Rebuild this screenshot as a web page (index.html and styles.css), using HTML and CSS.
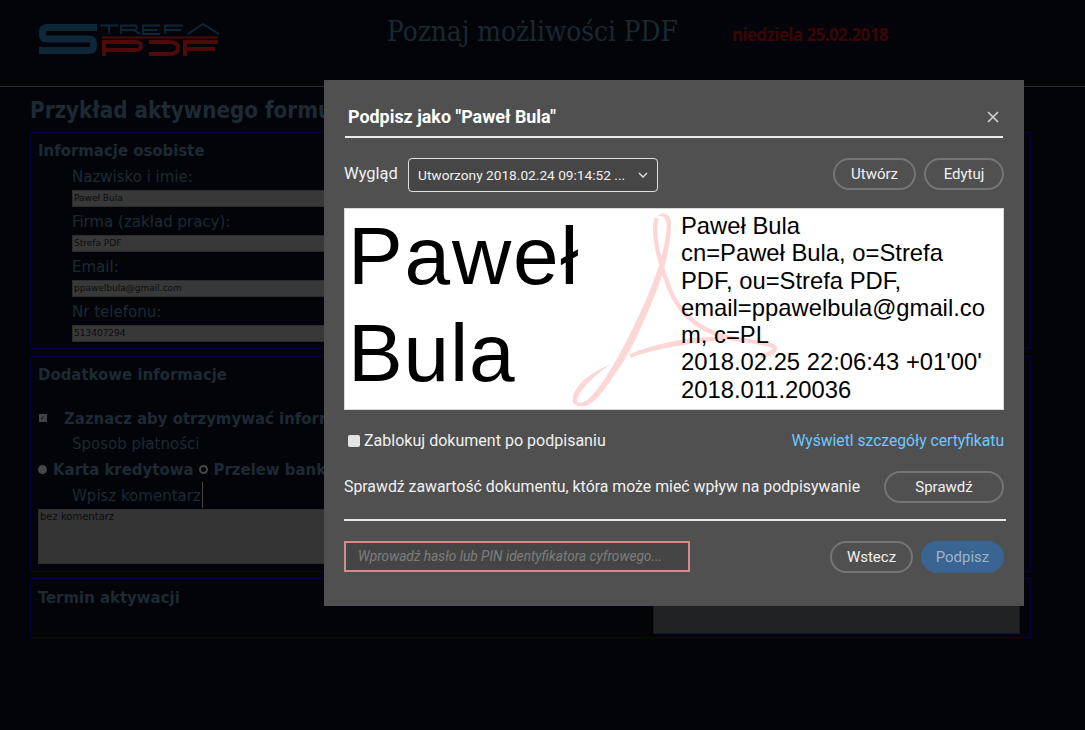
FILE: index.html
```html
<!DOCTYPE html>
<html lang="pl">
<head>
<meta charset="utf-8">
<title>Podpisz jako</title>
<link rel="stylesheet" href="styles.css">
</head>
<body>
<header class="top">
  <svg class="logo" width="190" height="40" viewBox="0 0 190 40" aria-label="Strefa PDF">
    <path d="M62 7.500H12Q7.500 7.500 7.500 12V15Q7.500 19 12 19H54Q58.500 19 58.500 24V26Q58.500 30.500 54 30.500H4" fill="none" stroke="#0d2738" stroke-width="7"/>
    <path d="M65 5.500H83M74 5.500V14M86 14V5.500H101Q103 9 100 10H86M99 10L105 14M125 5.500H108V14H125M108 10H122M148 5.500H130V14M130 10H146M153 14L168 4L184 14" fill="none" stroke="#0d2738" stroke-width="1.800"/>
    <path d="M67 17.500H183" stroke="#4d0a0a" stroke-width="1.800"/>
    <path d="M69 36V22H100Q106 22 106 26Q106 30 100 30H69M114 22H134Q143 22 143 28Q143 34 134 34H114M150 36V22H183M150 29H180" fill="none" stroke="#4d0a0a" stroke-width="4"/>
  </svg>
  <h1 class="site-title">Poznaj możliwości PDF</h1>
  <p class="site-date">niedziela 25.02.2018</p>
</header>
<main class="page">
  <h2 class="form-title">Przykład aktywnego formu</h2>
  <section class="box box-personal">
    <h3>Informacje osobiste</h3>
    <label class="lab">Nazwisko i imie:</label>
    <div class="field">Paweł Bula</div>
    <label class="lab">Firma (zakład pracy):</label>
    <div class="field">Strefa PDF</div>
    <label class="lab">Email:</label>
    <div class="field">ppawelbula@gmail.com</div>
    <label class="lab">Nr telefonu:</label>
    <div class="field">513407294</div>
  </section>
  <section class="box box-extra">
    <h3>Dodatkowe informacje</h3>
    <div class="check-row"><span class="mini-check">✓</span><strong>Zaznacz aby otrzymywać informacje</strong></div>
    <label class="lab">Sposob płatności</label>
    <div class="radio-row"><span class="radio on"></span><strong>Karta kredytowa</strong><span class="radio"></span><strong>Przelew bankowy</strong></div>
    <label class="lab lab-caret"><span class="caret">Wpisz komentarz</span></label>
    <div class="area">bez komentarz</div>
  </section>
  <section class="box box-term">
    <h3>Termin aktywacji</h3>
  </section>
</main>
<aside class="side-panel"></aside>
<div class="modal" role="dialog">
  <div class="modal-head">
    <span class="modal-title">Podpisz jako "Paweł Bula"</span>
    <svg class="close" width="12" height="12" viewBox="0 0 12 12"><path d="M1 1L11 11M11 1L1 11" stroke="#d4d4d4" stroke-width="1.600"/></svg>
  </div>
  <div class="row look">
    <span class="look-label">Wygląd</span>
    <div class="select"><span>Utworzony 2018.02.24 09:14:52 ...</span>
      <svg width="10" height="6" viewBox="0 0 10 6"><path d="M1 1L5 5L9 1" fill="none" stroke="#d8d8d8" stroke-width="1.500"/></svg>
    </div>
    <div class="spacer"></div>
    <button class="btn btn-s">Utwórz</button>
    <button class="btn btn-e">Edytuj</button>
  </div>
  <div class="preview">
    <svg class="acro" width="220" height="208" viewBox="0 0 660 624">
      <g fill="#fdd6d6">
        <path d="M290 40C305 20 335 25 333 65C332 130 312 215 265 320C235 390 205 455 165 510C135 555 110 590 85 602C60 612 35 605 38 585C42 545 90 505 150 482C105 512 60 555 52 585C48 600 65 600 85 585C120 555 165 480 205 400C250 310 315 170 320 70C322 40 305 30 290 40Z"/>
        <path d="M208 450C280 420 380 398 480 398L560 402C480 408 300 425 212 462Z"/>
      </g>
      <path d="M291 42C275 80 295 180 340 280C390 370 470 400 560 410C620 418 660 425 640 442C625 452 610 455 600 458" fill="none" stroke="#fdd6d6" stroke-width="13"/>
    </svg>
    <div class="sig-name"><div class="sig-first">Paweł</div><div class="sig-last">Bula</div></div>
    <div class="sig-info">Paweł Bula<br>cn=Paweł Bula, o=Strefa<br>PDF, ou=Strefa PDF,<br>email=ppawelbula@gmail.co<br>m, c=PL<br>2018.02.25 22:06:43 +01'00'<br>2018.011.20036</div>
  </div>
  <div class="row lock">
    <label class="lock-label"><span class="box-check"></span>Zablokuj dokument po podpisaniu</label>
    <a class="link">Wyświetl szczegóły certyfikatu</a>
  </div>
  <div class="row verify">
    <span>Sprawdź zawartość dokumentu, która może mieć wpływ na podpisywanie</span>
    <button class="btn btn-v">Sprawdź</button>
  </div>
  <div class="foot-rule"></div>
  <div class="row foot">
    <div class="pin">Wprowadź hasło lub PIN identyfikatora cyfrowego...</div>
    <div class="spacer"></div>
    <button class="btn btn-b">Wstecz</button>
    <button class="btn btn-p">Podpisz</button>
  </div>
</div>
</body>
</html>
```
FILE: styles.css
```css
* { box-sizing: border-box; }
html, body { margin: 0; height: 100%; }
body { width: 1085px; height: 730px; overflow: hidden; background: #02040a; position: relative; font-family: "DejaVu Sans Condensed", "DejaVu Sans", sans-serif; color: #1d2a33; }
.top { height: 87px; border-bottom: 1px solid #2a2b2d; display: flex; align-items: flex-start; }
.logo { margin: 20px 0 0 35px; flex: none; }
.site-title { margin: 14px 0 0 162px; font: 400 27.700px/36px "DejaVu Serif Condensed", "DejaVu Serif", serif; color: #1a2830; white-space: nowrap; }
.site-date { margin: 23px 0 0 54px; font: 700 17px/24px "Open Sans", sans-serif; letter-spacing: -0.6px; color: #3a0505; white-space: nowrap; }
.page { padding: 0 0 0 30px; width: 1040px; }
.form-title { margin: 10px 0 9px; font: 700 22.200px/26px "DejaVu Sans Condensed", "DejaVu Sans", sans-serif; white-space: nowrap; }
.box { border: 1px solid #04043c; width: 1001px; padding: 0 0 0 7px; }
.box h3 { margin: 0; font: 700 16.600px/20px "DejaVu Sans Condensed", "DejaVu Sans", sans-serif; }
.box-personal { height: 217px; padding-top: 8px; margin-bottom: 7px; }
.box-extra { height: 216px; padding-top: 8px; margin-bottom: 6px; }
.box-term { height: 60px; padding-top: 9px; }
.lab { display: block; margin-left: 34px; font: 400 16.700px/24px "DejaVu Sans Condensed", "DejaVu Sans", sans-serif; white-space: nowrap; }
.box-personal .lab { height: 28px; line-height: 28px; }
.box-personal h3 + .lab { margin-top: 1px; }
.field { margin-left: 34px; height: 17px; width: 590px; background: #383838; border: 1px solid #2c2c2c; font: 400 9px/15px "DejaVu Sans", sans-serif; color: #0d0d0d; padding-left: 1px; }
.check-row { margin-top: 20px; height: 26px; display: flex; align-items: center; font-size: 16.600px; white-space: nowrap; }
.mini-check { width: 8px; height: 8px; background: #444; color: #0a0a0a; font-size: 7px; line-height: 8px; text-align: center; margin: 0 17px 0 1px; flex: none; }
.radio-row { display: flex; align-items: center; height: 24px; margin-top: 2px; font-size: 16.600px; white-space: nowrap; }
.radio { width: 9px; height: 9px; border-radius: 50%; border: 2px solid #474747; margin: 0 6px 0 5px; flex: none; }
.radio.on { background: #474747; margin-left: 0; }
.lab-caret { margin-top: 1px; height: 26px; line-height: 26px; }
.caret { border-right: 1px solid #444; display: inline-block; height: 26px; padding-right: 1px; }
.area { margin-top: 1px; height: 55px; width: 620px; background: #343434; border: 1px solid #2d2d2d; font: 400 10px/13px "DejaVu Sans", sans-serif; color: #0d0d0d; padding-left: 1px; }
.side-panel { position: absolute; left: 653px; top: 560px; width: 367px; height: 74px; background: #212224; border: 1px solid #3a0a0a; }
.modal { position: absolute; left: 324px; top: 80px; width: 700px; height: 526px; background: #505050; padding: 0 20px; color: #f0f0f0; font: 400 15.850px/20px "Roboto", sans-serif; }
.modal-head { height: 58px; margin: 0 1px; border-bottom: 2px solid #eaeaea; display: flex; align-items: center; justify-content: space-between; padding: 18px 4px 0 3px; }
.modal-title { font-weight: 700; font-size: 17.900px; color: #fff; }
.row { display: flex; align-items: center; }
.spacer { flex: 1; }
.look { margin-top: 20px; height: 34px; align-items: flex-start; }
.look-label { width: 64px; line-height: 32px; font-size: 16.500px; }
.select { width: 250px; height: 34px; border: 1px solid #e0e0e0; border-radius: 4px; background: #464646; display: flex; align-items: center; justify-content: space-between; padding: 0 9px 1px 9px; font-size: 13.700px; }
.btn { font: 400 15px/20px "Roboto", sans-serif; color: #f0f0f0; background: transparent; border: 2px solid #757575; border-radius: 16px; height: 32px; padding: 0; }
.btn-s { width: 83px; margin-right: 8px; }
.btn-e { width: 80px; }
.preview { position: relative; margin-top: 16px; height: 202px; background: #fff; border: 1px solid #d9d9d9; color: #000; display: flex; overflow: hidden; }
.acro { position: absolute; left: 215px; top: -5px; }
.sig-name { width: 336px; position: relative; padding-left: 3px; font: 400 82px/93px "Liberation Sans", sans-serif; }
.sig-first { letter-spacing: 1.800px; }
.sig-last { line-height: 102px; letter-spacing: 0.800px; }
.sig-info { position: relative; padding-top: 3px; font: 400 23.800px/27.300px "Liberation Sans", sans-serif; white-space: nowrap; }
.lock { margin-top: 21px; height: 20px; justify-content: space-between; }
.lock-label { display: flex; align-items: center; padding-left: 4px; font-size: 16.050px; }
.box-check { width: 12px; height: 12px; border-radius: 2px; background: #e4e4e4; margin-right: 4px; }
.link { color: #6fc8ff; font-size: 15.650px; }
.verify { margin-top: 20px; height: 32px; justify-content: space-between; }
.btn-v { width: 120px; }
.foot-rule { margin-top: 16px; width: 662px; height: 2px; background: #e6e6e6; }
.foot { margin-top: 20px; height: 32px; align-items: flex-start; }
.pin { width: 346px; height: 31px; border: 2px solid #d68a8a; background: #454545; color: #7d7d7d; font-style: italic; font-size: 13.700px; line-height: 27px; padding-left: 12px; white-space: nowrap; }
.btn-b { width: 83px; margin-right: 8px; }
.btn-p { width: 83px; background: #3a6491; border-color: #3a6491; color: #9db3cc; }
```
